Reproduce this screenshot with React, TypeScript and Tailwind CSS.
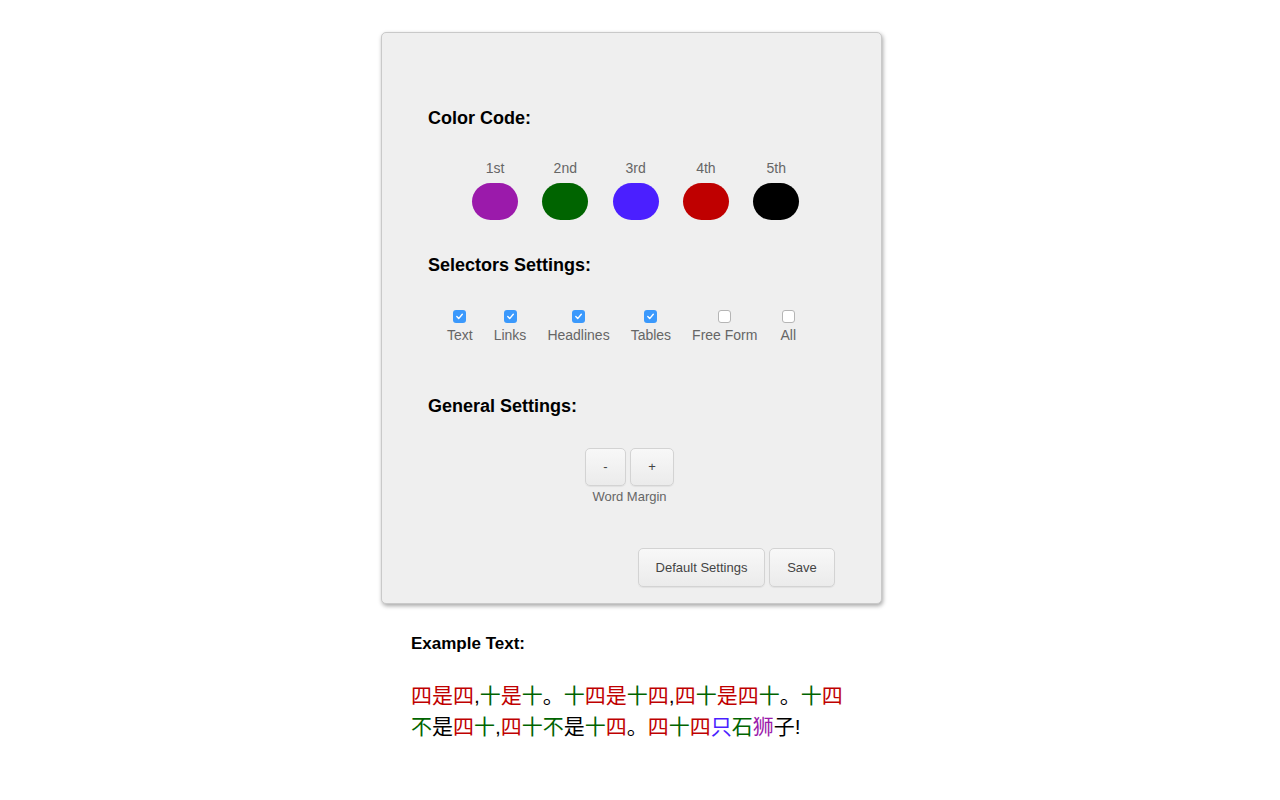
import { useState } from 'react'

const FONT = { fontFamily: '"Liberation Sans", Arial, sans-serif' }
const CJK = { fontFamily: '"Liberation Sans", "Noto Sans CJK SC", sans-serif' }

const swatches = [
  { label: '1st', color: 'bg-[#9b1aab]' },
  { label: '2nd', color: 'bg-[#006400]' },
  { label: '3rd', color: 'bg-[#4b1fff]' },
  { label: '4th', color: 'bg-[#bf0000]' },
  { label: '5th', color: 'bg-black' },
]

const selectorDefaults = [
  { name: 'Text', on: true },
  { name: 'Links', on: true },
  { name: 'Headlines', on: true },
  { name: 'Tables', on: true },
  { name: 'Free Form', on: false },
  { name: 'All', on: false },
]

// r = red, g = green, b = blue, p = purple, k = black
const colorClass: Record<string, string> = {
  r: 'text-[#bf0000]',
  g: 'text-[#006400]',
  b: 'text-[#4b1fff]',
  p: 'text-[#9b1aab]',
  k: 'text-black',
}

const sample: [string, string][] = [
  ['四', 'r'], ['是', 'r'], ['四', 'r'], [',', 'k'], ['十', 'g'], ['是', 'r'], ['十', 'g'], ['。', 'k'],
  ['十', 'g'], ['四', 'r'], ['是', 'r'], ['十', 'g'], ['四', 'r'], [',', 'k'],
  ['四', 'r'], ['十', 'g'], ['是', 'r'], ['四', 'r'], ['十', 'g'], ['。', 'k'],
  ['十', 'g'], ['四', 'r'], ['不', 'g'], ['是', 'k'], ['四', 'r'], ['十', 'g'], [',', 'k'],
  ['四', 'r'], ['十', 'g'], ['不', 'g'], ['是', 'k'], ['十', 'g'], ['四', 'r'], ['。', 'k'],
  ['四', 'r'], ['十', 'g'], ['四', 'r'], ['只', 'b'], ['石', 'g'], ['狮', 'p'], ['子', 'k'], ['!', 'k'],
]

function Checkbox({ checked, onClick }: { checked: boolean; onClick: () => void }) {
  return (
    <button
      onClick={onClick}
      className={
        checked
          ? 'w-[13px] h-[13px] rounded-[3px] bg-[#3b99fc] flex items-center justify-center'
          : 'w-[13px] h-[13px] rounded-[3px] bg-white border border-[#b5b5b5]'
      }
    >
      {checked && (
        <svg width="9" height="9" viewBox="0 0 9 9" fill="none">
          <path d="M1.8 4.6 L3.7 6.6 L7.3 2.2" stroke="white" strokeWidth="1.4" strokeLinecap="round" strokeLinejoin="round" />
        </svg>
      )}
    </button>
  )
}

const btn =
  'rounded-[5px] border border-[#d3d3d3] bg-gradient-to-b from-[#f8f8f8] to-[#ebebeb] shadow-[0_1px_1px_rgba(0,0,0,0.06)] text-[#444]'

export default function App() {
  const [selectors, setSelectors] = useState(selectorDefaults)
  const [margin, setMargin] = useState(0)

  const toggle = (i: number) =>
    setSelectors((s) => s.map((x, j) => (j === i ? { ...x, on: !x.on } : x)))

  return (
    <div className="min-h-[800px] bg-white pt-[32px]" style={FONT}>
      <div className="ml-[381px] w-[501px] h-[572px] rounded-[5px] border border-[#c9c9c9] bg-[#efefef] shadow-[1px_2px_4px_rgba(0,0,0,0.35)] pt-[74px] flex flex-col">
        <h2 className="ml-[46px] text-[18px] leading-[22px] font-bold text-black">Color Code:</h2>

        <div className="ml-[90px] mt-[30px] flex gap-[24.3px]">
          {swatches.map((s) => (
            <div key={s.label} className="flex flex-col items-center w-[46px]">
              <span className="text-[14px] leading-[18px] text-[#666]">{s.label}</span>
              <div className={`mt-[6px] w-[46px] h-[37px] rounded-[19px] ${s.color}`} />
            </div>
          ))}
        </div>

        <h2 className="ml-[46px] mt-[34px] text-[18px] leading-[22px] font-bold text-black">Selectors Settings:</h2>

        <div className="ml-[65px] mt-[34px] flex gap-[21px]">
          {selectors.map((s, i) => (
            <label key={s.name} className="flex flex-col items-center cursor-pointer last:ml-[2px]">
              <Checkbox checked={s.on} onClick={() => toggle(i)} />
              <span className="mt-[3px] text-[14px] leading-[18px] text-[#666]">{s.name}</span>
            </label>
          ))}
        </div>

        <h2 className="ml-[46px] mt-[51px] text-[18px] leading-[22px] font-bold text-black">General Settings:</h2>

        <div className="mt-[31px] flex flex-col items-center pr-[4px]">
          <div className="flex gap-[4px]">
            <button onClick={() => setMargin(margin - 1)} className={`${btn} w-[41px] h-[38px] text-[13px]`}>
              -
            </button>
            <button onClick={() => setMargin(margin + 1)} className={`${btn} w-[44px] h-[38px] text-[13px]`}>
              +
            </button>
          </div>
          <span className="mt-[3px] text-[13px] leading-[16px] text-[#666]">Word Margin</span>
        </div>

        <div className="mt-[43px] mr-[46px] flex justify-end gap-[4px]">
          <button className={`${btn} h-[39px] w-[127px] text-[13px]`}>Default Settings</button>
          <button className={`${btn} h-[39px] w-[66px] text-[13px]`}>Save</button>
        </div>
      </div>

      <div className="ml-[411px] mt-[30px] w-[440px]">
        <h3 className="text-[17px] leading-[20px] font-bold text-black">Example Text:</h3>
        <p className="mt-[26px] text-[21px] leading-[31px]" style={CJK}>
          {sample.map(([ch, c], i) => (
            <span key={i} className={colorClass[c]}>
              {ch}
            </span>
          ))}
        </p>
      </div>
    </div>
  )
}
